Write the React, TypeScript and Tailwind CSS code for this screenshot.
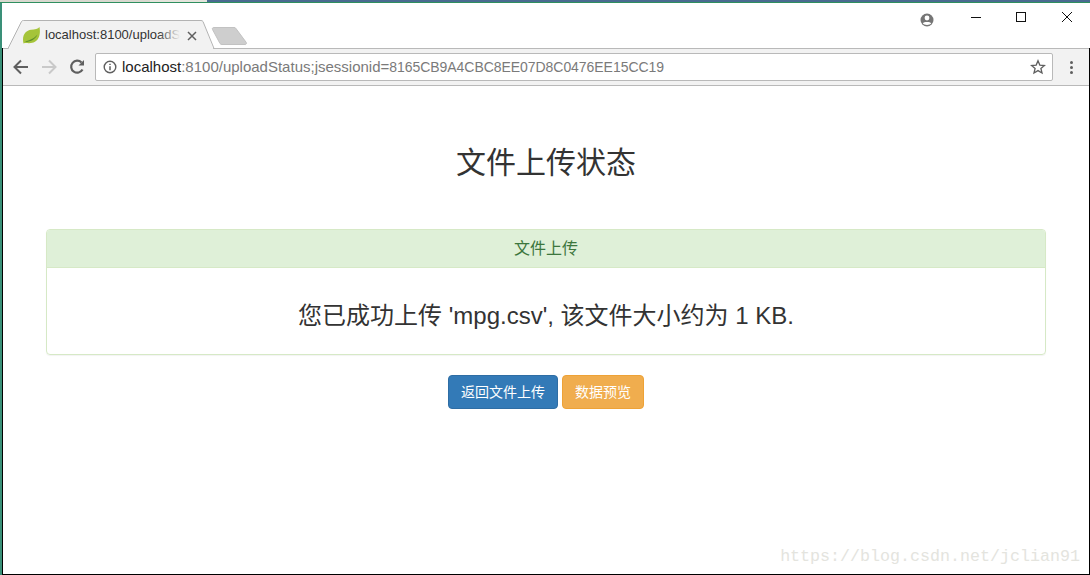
const sans = "font-['Liberation_Sans','Noto_Sans_CJK_SC',sans-serif]";

function TabShape() {
  return (
    <svg className="absolute left-0 top-[-3px]" width="260" height="52" viewBox="0 0 260 52">
      <path d="M6 49.500L19.500 21C20 20.800 20.500 20.500 21.500 20.500H199C200 20.500 200.500 20.800 201 21.500L211.500 49.500Z" fill="#f2f2f2" />
      <path d="M6 48.500L19.500 21.500C20 20.800 20.500 20.500 21.500 20.500H199C200 20.500 200.500 20.800 201 21.500L212 48.500" fill="none" stroke="#b3b3b3" />
      <path d="M210.500 29.500C210 28.300 210.600 27.500 212 27.500H232C233 27.500 233.600 27.800 234 28.600L244.300 42.500C244.800 43.500 244.300 44.500 243 44.500H220C219 44.500 218.500 44.100 218 43.500Z" fill="#cecece" stroke="#c2c2c2" />
    </svg>
  );
}

function Leaf() {
  return (
    <svg width="17" height="17" viewBox="0 0 17 17">
      <path d="M0.500 16.500C-1.500 8 3 3.500 8 2.800C12 2.300 15 2 16.500 0C17.800 7 16 13.500 10.500 15.500C6 16.800 3 15.500 0.500 16.500Z" fill="#a5c43a" />
      <path d="M2 15C5 13 10 13 14.500 7.500C12.500 12.500 7 15 2 15Z" fill="#5f8f2c" />
    </svg>
  );
}

function WindowControls() {
  return (
    <div className="flex items-start pr-[16px] pt-[7px]">
      <svg className="mr-[35px] mt-[3px]" width="14" height="14" viewBox="0 0 14 14">
        <circle cx="7" cy="7" r="6.500" fill="#757575" />
        <circle cx="7" cy="5" r="2.400" fill="#fff" />
        <path d="M2.800 10.500C3.800 8.600 10.200 8.600 11.200 10.500C9.800 12.400 4.200 12.400 2.800 10.500Z" fill="#fff" />
      </svg>
      <svg className="mr-[31px]" width="14" height="14" viewBox="0 0 14 14">
        <path d="M2 7.500H12" stroke="#111" strokeWidth="1" />
      </svg>
      <svg className="mr-[32px]" width="14" height="14" viewBox="0 0 14 14">
        <rect x="2.500" y="2.500" width="9" height="9" fill="none" stroke="#111" />
      </svg>
      <svg width="14" height="14" viewBox="0 0 14 14">
        <path d="M2 2L12 12M12 2L2 12" stroke="#111" strokeWidth="1" />
      </svg>
    </div>
  );
}

function Toolbar() {
  return (
    <div className="flex h-[38px] items-center border-y border-y-[#b9b9b9] bg-[#f2f2f2]">
      <svg className="ml-[9px]" width="18" height="18" viewBox="0 0 18 18">
        <path d="M16 9H3M9 2.500L2.500 9L9 15.500" fill="none" stroke="#5f5f5f" strokeWidth="2" />
      </svg>
      <svg className="ml-[10px]" width="18" height="18" viewBox="0 0 18 18">
        <path d="M2 9H15M9 2.500L15.500 9L9 15.500" fill="none" stroke="#c9c9c9" strokeWidth="2" />
      </svg>
      <svg className="ml-[10px]" width="18" height="18" viewBox="0 0 18 18">
        <path d="M14.500 11.500A6 6 0 1 1 13.500 4.500" fill="none" stroke="#5f5f5f" strokeWidth="2.200" />
        <path d="M10.500 7.500H16V2Z" fill="#5f5f5f" />
      </svg>
      <div className="ml-[9px] flex h-[28px] w-[958px] items-center rounded-[2px] border border-[#b9b9b9] bg-white pl-[7px] pr-[6px]">
        <svg width="14" height="14" viewBox="0 0 14 14">
          <circle cx="7" cy="7" r="5.800" fill="none" stroke="#5f5f5f" strokeWidth="1.400" />
          <path d="M7 6.200V10.200M7 3.800V5" stroke="#5f5f5f" strokeWidth="1.500" />
        </svg>
        <span className="ml-[5px] flex-1 text-[15px] whitespace-nowrap text-[#7a7a7a]">
          <span className="text-[#222]">localhost</span>:8100/uploadStatus;jsessionid=
          <span className="text-[14px] tracking-[-0.05px]">8165CB9A4CBC8EE07D8C0476EE15CC19</span>
        </span>
        <svg width="16" height="16" viewBox="0 0 16 16">
          <path d="M8 1.800L9.800 6.100L14.400 6.500L10.900 9.500L12 14L8 11.600L4 14L5.100 9.500L1.600 6.500L6.200 6.100Z" fill="none" stroke="#5f5f5f" strokeWidth="1.300" />
        </svg>
      </div>
      <div className="ml-[17px] flex flex-col gap-[2px]">
        <div className="size-[3px] rounded-full bg-[#5f5f5f]" />
        <div className="size-[3px] rounded-full bg-[#5f5f5f]" />
        <div className="size-[3px] rounded-full bg-[#5f5f5f]" />
      </div>
    </div>
  );
}

export default function App() {
  return (
    <div className={`relative flex h-[575px] w-[1090px] flex-col overflow-hidden bg-white ${sans}`}>
      <div className="flex h-[2px]">
        <div className="w-[150px] bg-[#d8d8cf]" />
        <div className="w-[57px] bg-[#e4e4dc]" />
        <div className="flex-1 bg-[#4a6a90]" />
      </div>
      <div className="h-[1px] bg-[#2f8f5f]" />

      <div className="flex flex-1 flex-col border-l-2 border-l-[#3a9078]">
        <div className="relative flex h-[45px] justify-end bg-white">
          <TabShape />
          <div className="absolute left-[21px] top-[24px] flex items-center">
            <Leaf />
            <div className="relative ml-[5px] -mt-[2px] w-[135px] text-[13px] whitespace-nowrap text-[#333]">
              localhost:8100/uploadS
              <div className="absolute inset-y-0 right-0 w-[22px] bg-gradient-to-r from-transparent to-[#f2f2f2]" />
            </div>
            <svg className="ml-[7px]" width="10" height="10" viewBox="0 0 10 10">
              <path d="M1 1L9 9M9 1L1 9" stroke="#5f5f5f" strokeWidth="1.500" />
            </svg>
          </div>
          <WindowControls />
        </div>

        <div className="flex flex-1 flex-col border-r border-b border-l border-black">
          <Toolbar />

          <div className="flex flex-1 flex-col items-center px-[43px] pt-[57px]">
            <h1 className="text-[30px] leading-[40px] text-[#333]">文件上传状态</h1>

            <div className="mt-[46px] w-full overflow-hidden rounded-[4px] border border-[#d6e9c6] shadow-[0_1px_1px_rgba(0,0,0,0.05)]">
              <div className="flex h-[38px] items-center justify-center border-b border-[#d6e9c6] bg-[#dff0d8] text-[16px] text-[#3c763d]">
                文件上传
              </div>
              <div className="flex h-[86px] items-center justify-center pt-[10px] text-[24px] text-[#333]">
                您已成功上传 'mpg.csv', 该文件大小约为 1 KB.
              </div>
            </div>

            <div className="mt-[20px] flex gap-[4px]">
              <button className="h-[34px] rounded-[4px] border border-[#2e6da4] bg-[#337ab7] px-[12px] text-[14px] text-white">
                返回文件上传
              </button>
              <button className="h-[34px] rounded-[4px] border border-[#eea236] bg-[#f0ad4e] px-[12px] text-[14px] text-white">
                数据预览
              </button>
            </div>
          </div>
        </div>
      </div>

      <div className="absolute right-[10px] bottom-[6px] font-['Liberation_Mono',monospace] text-[16.67px] text-[#e4e4de]">
        https://blog.csdn.net/jclian91
      </div>
    </div>
  );
}
